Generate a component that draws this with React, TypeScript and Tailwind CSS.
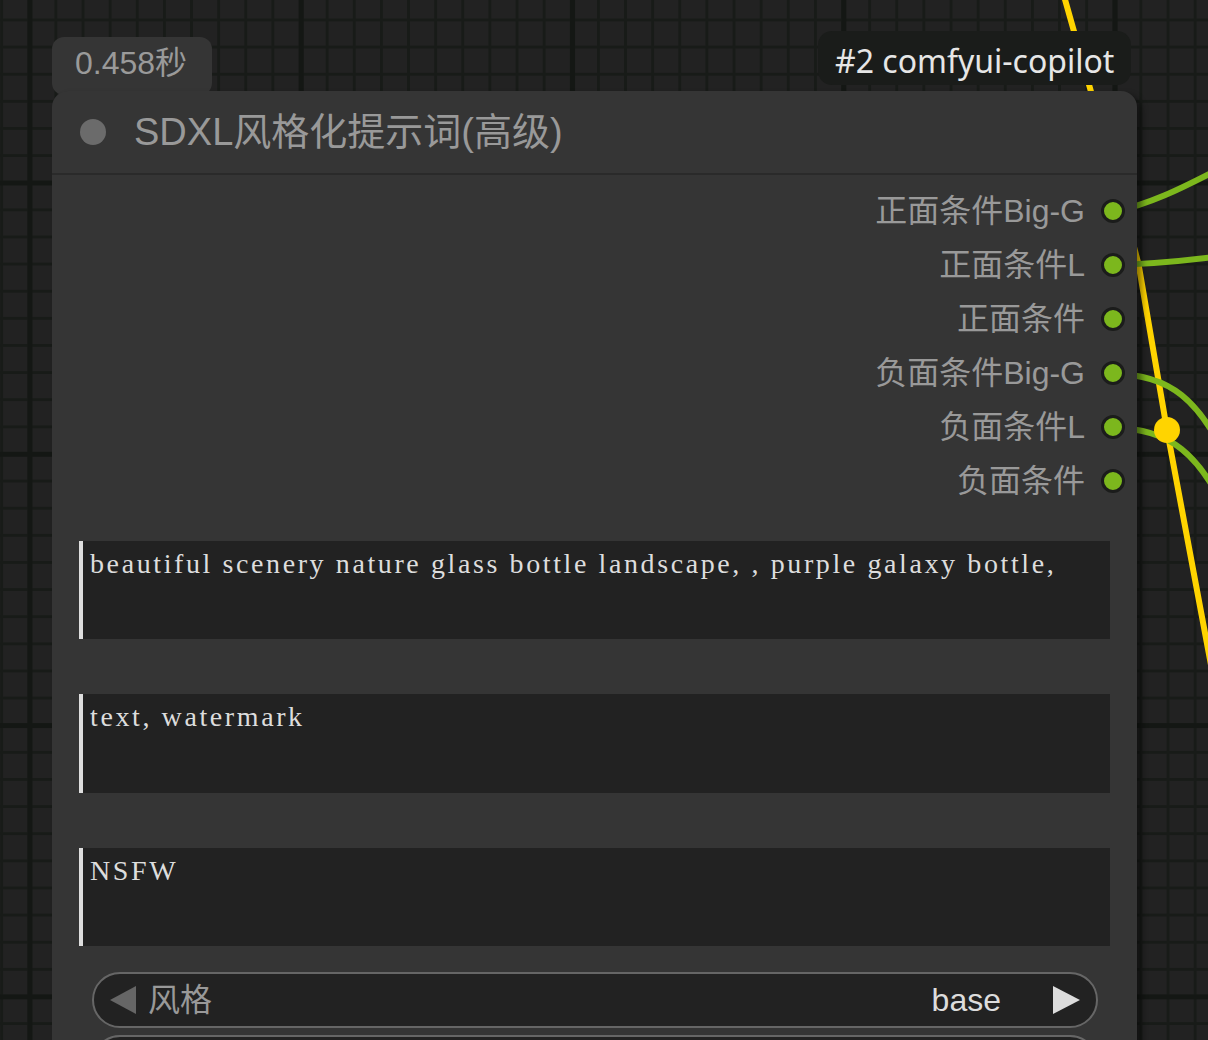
import React from "react";

const sans = "font-['Liberation_Sans','Noto_Sans_CJK_SC',sans-serif]";

const outputs = [
  "正面条件Big-G",
  "正面条件L",
  "正面条件",
  "负面条件Big-G",
  "负面条件L",
  "负面条件",
];

function OutputRow({ label }: { label: string }) {
  return (
    <div className="flex h-[54px] items-center justify-end gap-[16px] pr-[12px]">
      <span className={`${sans} text-[32px] leading-none text-[#999999]`}>{label}</span>
      <span className="h-[24px] w-[24px] rounded-full border-[3px] border-[#1b1c1b] bg-[#7cb71d]" />
    </div>
  );
}

function PromptBox({ text, className = "" }: { text: string; className?: string }) {
  return (
    <div
      className={`ml-[27px] h-[99px] w-[1031px] border-l-[4px] border-[#dedede] bg-[#222222] pl-[7px] pt-[7px] ${className}`}
    >
      <div className="whitespace-pre font-['Liberation_Serif',serif] text-[28px] leading-[32px] tracking-[2.6px] text-[#dddddd]">
        {text}
      </div>
    </div>
  );
}

function Combo({ className = "", label, value }: { className?: string; label?: string; value?: string }) {
  return (
    <div
      className={`ml-[40px] flex h-[56px] w-[1006px] shrink-0 items-center rounded-full border-[2px] border-[#666666] bg-[#222222] pl-[16px] pr-[16px] ${className}`}
    >
      {label !== undefined && (
        <>
          <svg width="26" height="28" viewBox="0 0 26 28" className="shrink-0">
            <polygon points="26,0 26,28 0,14" fill="#666666" />
          </svg>
          <span className={`${sans} ml-[12px] text-[32px] leading-none text-[#999999]`}>{label}</span>
          <span className="flex-1" />
          <span className={`${sans} text-[32px] leading-none text-[#dddddd]`}>{value}</span>
          <svg width="27" height="28" viewBox="0 0 27 28" className="ml-[52px] shrink-0">
            <polygon points="0,0 27,14 0,28" fill="#dddddd" />
          </svg>
        </>
      )}
    </div>
  );
}

export default function App() {
  return (
    <div className="relative h-[1040px] w-[1208px] overflow-hidden bg-[#222222] [background-image:linear-gradient(to_right,#141714_5px,transparent_5px),linear-gradient(to_bottom,#141714_5px,transparent_5px),linear-gradient(to_right,#181b18_3px,transparent_3px),linear-gradient(to_bottom,#181b18_3px,transparent_3px)] [background-size:271.3px_271.3px,271.3px_271.3px,27.13px_27.13px,27.13px_27.13px] [background-position:27.5px_180.5px,27.5px_180.5px,0.2px_18.5px,0.2px_18.5px]">
      {/* links */}
      <svg className="absolute left-0 top-0" width="1208" height="1040" viewBox="0 0 1208 1040">
        <path
          d="M1064,-4 Q1137,254 1139,267 L1167,430 L1211,665"
          fill="none"
          stroke="#ffd400"
          strokeWidth="6"
          strokeLinejoin="round"
        />
        <path d="M1113,212 C1150,204 1180,189 1215,171" fill="none" stroke="#7cb71d" strokeWidth="6" />
        <path d="M1113,265 C1160,264 1190,260 1215,257" fill="none" stroke="#7cb71d" strokeWidth="6" />
        <path d="M1113,374 C1170,374 1200,400 1230,465" fill="none" stroke="#7cb71d" strokeWidth="6" />
        <path d="M1113,428 C1170,428 1200,454 1230,519" fill="none" stroke="#7cb71d" strokeWidth="6" />
        <circle cx="1167" cy="430" r="13" fill="#ffd400" />
      </svg>

      {/* execution time badge */}
      <div className="absolute left-[52px] top-[37px] flex h-[58px] w-[160px] items-start justify-center rounded-[12px] bg-[#353535]">
        <div className={`${sans} -ml-[2px] flex h-[52px] items-center text-[32px] leading-none text-[#9a9a9a]`}>0.458秒</div>
      </div>

      {/* node id badge */}
      <div className="absolute left-[818px] top-[31px] flex h-[54px] w-[313px] items-center rounded-[14px] bg-[#1a1c1a] pl-[17px] pt-[6px]">
        <span className="font-['Noto_Sans',sans-serif] text-[32px] leading-none text-[#e6e6e6]">#2 comfyui-copilot</span>
      </div>

      {/* node */}
      <div className="absolute left-[52px] top-[91px] flex h-[1000px] w-[1085px] flex-col rounded-t-[16px] bg-[#353535] shadow-[5px_4px_6px_rgba(0,0,0,0.45)]">
        <div className="flex h-[82px] shrink-0 items-center pl-[28px]">
          <span className="h-[26px] w-[26px] rounded-full bg-[#6b6b6b]" />
          <span className={`${sans} ml-[28px] text-[38px] leading-none text-[#999999]`}>SDXL风格化提示词(高级)</span>
        </div>
        <div className="h-[2px] shrink-0 bg-[#2a2a2a]" />
        <div className="flex flex-col pt-[9px]">
          {outputs.map((o) => (
            <OutputRow key={o} label={o} />
          ))}
        </div>
        <PromptBox
          className="mt-[33px]"
          text="beautiful scenery nature glass bottle landscape, , purple galaxy bottle,"
        />
        <PromptBox className="mt-[55px]" text="text, watermark" />
        <PromptBox className="mt-[55px]" text="NSFW" />
        <Combo className="mt-[26px]" label="风格" value="base" />
        <Combo className="mt-[7px]" />
      </div>
    </div>
  );
}
